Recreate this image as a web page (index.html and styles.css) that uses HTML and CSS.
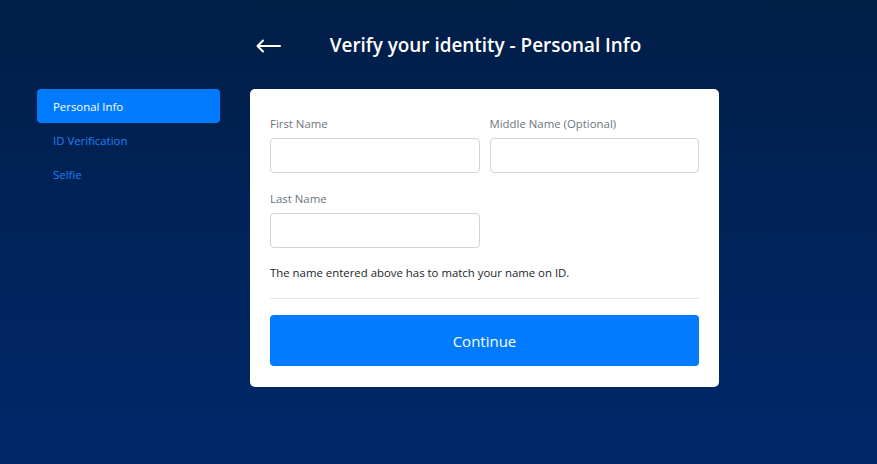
FILE: index.html
```html
<!DOCTYPE html>
<html lang="en">
<head>
<meta charset="utf-8">
<title>Verify your identity</title>
<link rel="stylesheet" href="styles.css">
</head>
<body>
<div class="page">
  <div class="center-col">
    <header class="header">
      <button class="back" aria-label="Back">
        <svg width="25" height="14" viewBox="0 0 25 14" fill="none" stroke="#fff" stroke-width="2" stroke-linecap="round" stroke-linejoin="round"><path d="M24 7H1.5M7 1.5L1.5 7 7 12.5"/></svg>
      </button>
      <h1 class="title">Verify your identity - Personal Info</h1>
    </header>
  </div>
</div>
<div class="main">
  <nav class="sidebar">
    <a class="nav-item active">Personal Info</a>
    <a class="nav-item">ID Verification</a>
    <a class="nav-item">Selfie</a>
  </nav>
  <form class="card">
    <div class="row">
      <div class="field">
        <label class="label">First Name</label>
        <input class="input" type="text">
      </div>
      <div class="field">
        <label class="label">Middle Name (Optional)</label>
        <input class="input" type="text">
      </div>
    </div>
    <div class="row">
      <div class="field">
        <label class="label">Last Name</label>
        <input class="input" type="text">
      </div>
      <div class="field"></div>
    </div>
    <p class="note">The name entered above has to match your name on ID.</p>
    <hr class="divider">
    <button class="btn" type="button">Continue</button>
  </form>
</div>
</body>
</html>
```

FILE: styles.css
```css
* { box-sizing: border-box; }
html, body { height: 100%; }
body {
  margin: 0;
  min-height: 464px;
  background: linear-gradient(to bottom, #011e47 0%, #00286a 100%);
  font-family: "Open Sans", "Noto Sans", sans-serif;
  color: #212529;
}
.page {
  display: flex;
  padding-left: 250px;
}
.center-col { width: 469px; }
.header {
  height: 89px;
  display: flex;
  align-items: center;
}
.back {
  background: none;
  border: 0;
  padding: 0;
  margin-left: 6px;
  margin-top: 2px;
  width: 25px;
  height: 14px;
  display: flex;
  cursor: pointer;
}
.title {
  flex: 1;
  margin: 0 0 0 -29px;
  text-align: center;
  color: #fff;
  font-size: 18.9px;
  font-weight: 600;
}
.main {
  display: flex;
  align-items: flex-start;
  padding-left: 37px;
  gap: 30px;
}
.sidebar {
  width: 183px;
  display: flex;
  flex-direction: column;
}
.nav-item {
  height: 34px;
  display: flex;
  align-items: center;
  padding-left: 16px;
  padding-top: 1px;
  font-size: 11.4px;
  color: #1d82f5;
  border-radius: 4px;
}
.nav-item.active {
  background: #007bff;
  color: #fff;
}
.card {
  width: 469px;
  background: #fff;
  border-radius: 5px;
  padding: 26px 20px 21px;
  margin: 0;
}
.row {
  display: flex;
  gap: 10px;
  margin-bottom: 17px;
}
.field {
  flex: 1;
  min-width: 0;
  display: flex;
  flex-direction: column;
}
.label {
  font-size: 11.4px;
  color: #6c757d;
  line-height: 17px;
  margin-bottom: 6px;
}
.input {
  width: 100%;
  height: 35px;
  border: 1px solid #ced4da;
  border-radius: 4px;
  font: inherit;
  padding: 0 10px;
}
.note {
  margin: -1px 0 0;
  font-size: 11.4px;
  line-height: 17px;
  color: #212529;
}
.divider {
  border: 0;
  border-top: 1px solid #e3e5e8;
  margin: 17px 0 16px;
}
.btn {
  display: block;
  width: 100%;
  height: 51px;
  background: #007bff;
  border: 0;
  border-radius: 4px;
  color: #fff;
  font-family: inherit;
  font-size: 15px;
  cursor: pointer;
}
```
